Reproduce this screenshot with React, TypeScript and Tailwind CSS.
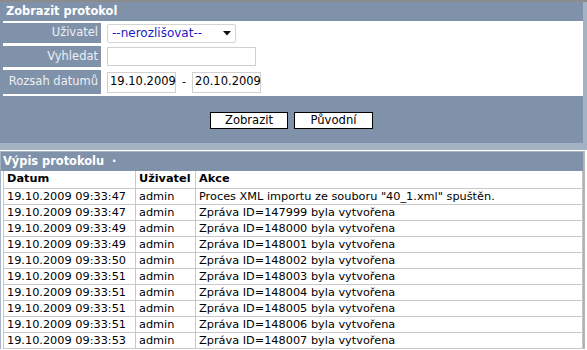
const rows: [string, string, string][] = [
  ['19.10.2009 09:33:47', 'admin', 'Proces XML importu ze souboru "40_1.xml" spuštěn.'],
  ['19.10.2009 09:33:47', 'admin', 'Zpráva ID=147999 byla vytvořena'],
  ['19.10.2009 09:33:49', 'admin', 'Zpráva ID=148000 byla vytvořena'],
  ['19.10.2009 09:33:49', 'admin', 'Zpráva ID=148001 byla vytvořena'],
  ['19.10.2009 09:33:50', 'admin', 'Zpráva ID=148002 byla vytvořena'],
  ['19.10.2009 09:33:51', 'admin', 'Zpráva ID=148003 byla vytvořena'],
  ['19.10.2009 09:33:51', 'admin', 'Zpráva ID=148004 byla vytvořena'],
  ['19.10.2009 09:33:51', 'admin', 'Zpráva ID=148005 byla vytvořena'],
  ['19.10.2009 09:33:51', 'admin', 'Zpráva ID=148006 byla vytvořena'],
  ['19.10.2009 09:33:53', 'admin', 'Zpráva ID=148007 byla vytvořena'],
];

function Label({ children }: { children: string }) {
  return (
    <div className="w-[98px] shrink-0 bg-[#7f92aa] text-[#eceff4] text-[11.5px] pr-[3px] flex items-center justify-end">
      {children}
    </div>
  );
}

export default function App() {
  return (
    <div className="w-[587px] h-[350px] overflow-hidden bg-white text-[11.3px] font-['DejaVu_Sans',Verdana,sans-serif]">
      <div className="h-[2px] bg-[#8c8c8c]" />

      {/* filter panel */}
      <div className="bg-[#a3b3c4] pr-[4px] pb-[7px]">
        <div className="bg-[#7f92aa] pl-[3px]">
          <div className="h-[19px] flex items-center pl-[3px] text-white font-bold text-[11.4px]">
            Zobrazit protokol
          </div>
          <div className="bg-white flex flex-col gap-[3px] pt-[2px] pb-[2px]">
            <div className="flex h-[20px]">
              <Label>Uživatel</Label>
              <div className="pl-[6px] flex items-center">
                <div className="w-[129px] h-[19px] border border-[#d4d4d4] rounded-[2px] flex items-center justify-between pl-[4px] pr-[4px] text-[12px] text-[#1c1cc4]">
                  <span>--nerozlišovat--</span>
                  <svg width="8" height="5" viewBox="0 0 8 5">
                    <path d="M0 0h8L4 4.5z" fill="#111" />
                  </svg>
                </div>
              </div>
            </div>
            <div className="flex h-[21px]">
              <Label>Vyhledat</Label>
              <div className="pl-[6px] flex items-center">
                <div className="w-[149px] h-[19px] border border-[#d0d0d0]" />
              </div>
            </div>
            <div className="flex h-[24px]">
              <Label>Rozsah datumů</Label>
              <div className="pl-[6px] flex items-center gap-[6px]">
                <div className="w-[69px] h-[21px] border border-[#d0d0d0] flex items-center pl-[2px] text-[11.5px]">19.10.2009</div>
                <span>-</span>
                <div className="w-[69px] h-[21px] border border-[#d0d0d0] flex items-center pl-[2px] text-[11.5px]">20.10.2009</div>
              </div>
            </div>
          </div>
          <div className="h-[47px] flex justify-center items-start pt-[16px] gap-[6px] pr-[3px]">
            <button className="w-[78px] h-[17px] bg-white border border-black leading-none text-[11.6px]">Zobrazit</button>
            <button className="w-[79px] h-[17px] bg-white border border-black leading-none text-[11.6px]">Původní</button>
          </div>
        </div>
      </div>

      <div className="h-[1px] bg-white" />

      {/* log list */}
      <div className="w-[585px] border-r border-[#b5b5b5]">
        <div className="w-[584px] border border-[#a3b3c4] border-b-0">
          <div className="h-[19px] bg-[#7f92aa] flex items-center pl-[2px] text-white font-bold text-[11.4px]">
            Výpis protokolu&nbsp;&nbsp;·
          </div>
          <div className="pl-[2px]">
            <table className="w-full border-collapse text-black">
              <thead>
                <tr className="h-[17px]">
                  <th className="w-[132px] text-left font-bold pl-[3px] border border-[#c8c8c8] border-t-0">Datum</th>
                  <th className="w-[60px] text-left font-bold pl-[3px] border border-[#c8c8c8] border-t-0">Uživatel</th>
                  <th className="text-left font-bold pl-[3px] border border-[#c8c8c8] border-t-0">Akce</th>
                </tr>
              </thead>
              <tbody>
                {rows.map((r, i) => (
                  <tr key={i} className="h-[16px] leading-[15px]">
                    <td className="pl-[3px] border border-[#c8c8c8] whitespace-nowrap">{r[0]}</td>
                    <td className="pl-[3px] border border-[#c8c8c8]">{r[1]}</td>
                    <td className="pl-[3px] border border-[#c8c8c8] whitespace-nowrap">{r[2]}</td>
                  </tr>
                ))}
              </tbody>
            </table>
          </div>
        </div>
      </div>
    </div>
  );
}
